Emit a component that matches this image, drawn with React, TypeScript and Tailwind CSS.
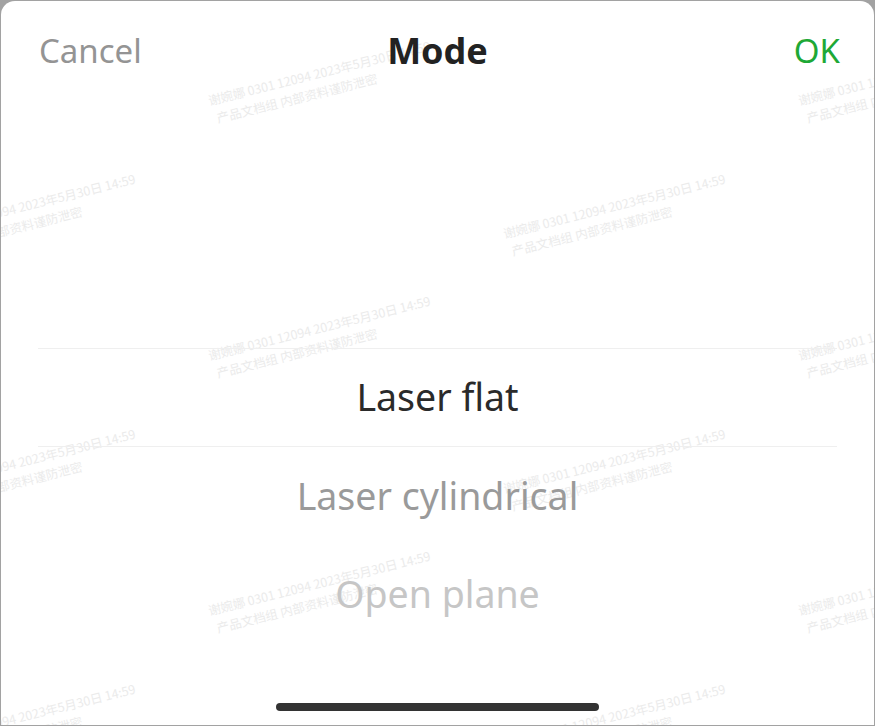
import React from 'react'

const marks = [
  { x: 205, y: 90 },
  { x: 205, y: 345 },
  { x: 205, y: 600 },
  { x: 795, y: 90 },
  { x: 795, y: 345 },
  { x: 795, y: 600 },
  { x: -90, y: 223 },
  { x: -90, y: 478 },
  { x: -90, y: 733 },
  { x: 500, y: 223 },
  { x: 500, y: 478 },
  { x: 500, y: 733 },
]

function Watermarks() {
  return (
    <div className="pointer-events-none absolute inset-0 overflow-hidden">
      {marks.map((m, i) => (
        <div
          key={i}
          className="absolute origin-top-left -rotate-[14deg] whitespace-nowrap text-[12.5px] leading-[19px] text-[#ebebeb] [font-family:'Noto_Sans_CJK_SC',sans-serif]"
          style={{ left: m.x, top: m.y }}
        >
          <div>谢婉娜 0301 12094 2023年5月30日 14:59</div>
          <div className="pl-[4px]">产品文档组 内部资料谨防泄密</div>
        </div>
      ))}
    </div>
  )
}

const options = [
  { label: 'Laser flat', cls: 'text-[#2a2a2a]' },
  { label: 'Laser cylindrical', cls: 'text-[#9a9a9a]' },
  { label: 'Open plane', cls: 'text-[#c6c6c6]' },
]

export default function App() {
  return (
    <div className="w-[875px] h-[726px] bg-[#a2a2a2] pt-px px-px pb-px [font-family:'Noto_Sans',sans-serif]">
      <div className="relative h-full bg-white rounded-t-[14px] flex flex-col overflow-hidden">
        <Watermarks />

        <div className="relative h-[99px] flex items-center justify-between pl-[38px] pr-[34px]">
          <span className="text-[33px] text-[#949494]">Cancel</span>
          <span className="absolute left-0 right-0 text-center text-[36px] font-bold text-[#222]">Mode</span>
          <span className="text-[33px] text-[#1ea836]">OK</span>
        </div>

        <div className="relative flex-1 px-[37px] pt-[248px]">
          <div className="h-[99px] flex items-center justify-center border-y border-[#efefef]">
            <span className={'text-[37.5px] ' + options[0].cls}>{options[0].label}</span>
          </div>
          {options.slice(1).map((o) => (
            <div key={o.label} className="h-[98px] flex items-center justify-center">
              <span className={'text-[37.5px] ' + o.cls}>{o.label}</span>
            </div>
          ))}
        </div>

        <div className="relative flex justify-center pb-[14px]">
          <div className="w-[323px] h-[8px] rounded-full bg-[#333]" />
        </div>
      </div>
    </div>
  )
}
